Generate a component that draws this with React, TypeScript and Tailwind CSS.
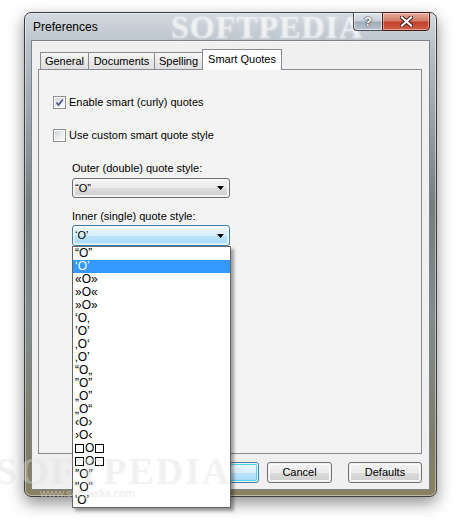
import React from "react";

const items = [
  "\u201CO\u201D",
  "\u2018O\u2019",
  "\u00ABO\u00BB",
  "\u00BBO\u00AB",
  "\u00BBO\u00BB",
  "\u2018O\u201A",
  "\u2019O\u2019",
  "\u201AO\u2018",
  "\u201AO\u2019",
  "\u201CO\u201E",
  "\u201DO\u201D",
  "\u201EO\u201D",
  "\u201EO\u201C",
  "\u2039O\u203A",
  "\u203AO\u2039",
  "BOX",
  "BOX",
  "\u2033O\u2033",
  '"O"',
  "'O'",
];

function Checkbox({ checked }: { checked: boolean }) {
  return (
    <div className="w-[13px] h-[13px] border border-[#8e8f8f] bg-white p-px shrink-0">
      <div className="w-full h-full bg-[linear-gradient(135deg,#d3d6da_0%,#eceef0_60%,#f8f8f8_100%)] relative">
        {checked && (
          <svg width="11" height="11" viewBox="0 0 11 11" className="absolute -left-px -top-px">
            <path d="M2.5 5.5 L4.5 8 L8.8 2.5" fill="none" stroke="#4a5c93" strokeWidth="1.8" />
          </svg>
        )}
      </div>
    </div>
  );
}

function Arrow() {
  return (
    <svg width="7" height="4" viewBox="0 0 7 4" className="shrink-0">
      <path d="M0 0 H7 L3.5 4 Z" fill="#000" />
    </svg>
  );
}

function VistaButton({ label, w, def }: { label: string; w: string; def?: boolean }) {
  return (
    <div
      className={`${w} h-[21px] rounded-[3px] border ${
        def ? "border-[#3c7fb1]" : "border-[#707070]"
      } p-px`}
    >
      <div
        className={`w-full h-full rounded-[2px] flex items-center justify-center text-[11px] text-black ${
          def
            ? "bg-[linear-gradient(180deg,#eaf6fd_0%,#d9f0fc_50%,#bee6fd_51%,#a7d9f5_100%)] shadow-[inset_0_0_0_1px_#48d6fb]"
            : "bg-[linear-gradient(180deg,#f2f2f2_0%,#ebebeb_50%,#dddddd_51%,#cfcfcf_100%)] shadow-[inset_0_0_0_1px_rgba(255,255,255,0.8)]"
        }`}
      >
        {label}
      </div>
    </div>
  );
}

function BoxItem() {
  return (
    <span className="inline-flex items-center gap-[1px] h-[13px]">
      <span className="inline-block w-[9px] h-[9px] border border-black" />
      <span>O</span>
      <span className="inline-block w-[9px] h-[9px] border border-black" />
    </span>
  );
}

export default function App() {
  return (
    <div className="relative w-[457px] h-[530px] bg-white overflow-hidden font-['Liberation_Sans',Arial,sans-serif] text-[11px] leading-[13px] text-black">
      {/* Window */}
      <div className="relative ml-[24px] mt-[12px] w-[413px] h-[485px] rounded-[7px] border border-[#3a3e43] flex flex-col bg-[linear-gradient(180deg,#d3d9df_0%,#bcc4cb_6%,#9aa3a9_22%,#737d7b_40%,#838c8c_62%,#7e7c68_88%,#8a8160_100%)] shadow-[inset_0_0_0_1px_rgba(255,255,255,0.45),0_6px_16px_rgba(0,0,0,0.45)]">
        {/* Title watermark */}
        <div className="absolute left-[146px] top-[-2px] text-[32px] leading-[32px] font-bold font-['Liberation_Serif',serif] tracking-[1px] text-white/40 [text-shadow:0_0_3px_rgba(255,255,255,0.6)] pointer-events-none select-none">
          SOFTPEDIA
        </div>
        {/* Title bar */}
        <div className="h-[27px] flex items-start relative">
          <div className="pl-[8px] pt-[7px] text-[12px] leading-[15px] text-black">
            Preferences
          </div>
          <div className="ml-auto mr-[6px] -mt-px flex">
            <div className="w-[29px] h-[19px] rounded-bl-[4px] border border-[#4a5058] border-r-0 bg-[linear-gradient(180deg,#e4e8ed_0%,#c8d0d8_45%,#a3adb8_55%,#b9c3cc_100%)] shadow-[inset_0_0_0_1px_rgba(255,255,255,0.5)] flex items-center justify-center">
              <span className="text-[13px] leading-[13px] font-bold text-white [text-shadow:0_0_2px_#222,0_0_1px_#222]">?</span>
            </div>
            <div className="w-[48px] h-[19px] rounded-br-[4px] border border-[#4a1c14] bg-[linear-gradient(180deg,#e9a99b_0%,#d47c6a_45%,#c2412c_55%,#d0604a_100%)] shadow-[inset_0_0_0_1px_rgba(255,255,255,0.4)] flex items-center justify-center">
              <svg width="13" height="11" viewBox="0 0 13 11">
                <path d="M2 1.5 L11 9.5 M11 1.5 L2 9.5" stroke="#3a1a14" strokeWidth="4" strokeLinecap="square" />
                <path d="M2 1.5 L11 9.5 M11 1.5 L2 9.5" stroke="#ffffff" strokeWidth="2.2" strokeLinecap="square" />
              </svg>
            </div>
          </div>
        </div>

        {/* Client area */}
        <div className="flex-1 mx-[6px] mb-[6px] border border-[#7b838c] bg-[#f0f0f0] flex flex-col">
          <div className="ml-[6px] mt-[8px] w-[384px]">
            {/* Tabs */}
            <div className="flex items-end h-[20px] pl-[2px]">
              <div className="w-[49px] h-[17px] border border-b-0 border-[#898c95] bg-[linear-gradient(180deg,#f7f7f7_0%,#e9e9e9_50%,#dedede_100%)] flex items-center justify-center">
                General
              </div>
              <div className="-ml-px w-[67px] h-[17px] border border-b-0 border-[#898c95] bg-[linear-gradient(180deg,#f7f7f7_0%,#e9e9e9_50%,#dedede_100%)] flex items-center justify-center">
                Documents
              </div>
              <div className="-ml-px w-[49px] h-[17px] border border-b-0 border-[#898c95] bg-[linear-gradient(180deg,#f7f7f7_0%,#e9e9e9_50%,#dedede_100%)] flex items-center justify-center">
                Spelling
              </div>
              <div className="-ml-px w-[80px] h-[21px] -mb-px relative z-10 border border-b-0 border-[#898c95] bg-white flex items-start justify-center pt-[3px]">
                Smart Quotes
              </div>
            </div>
            {/* Panel */}
            <div className="h-[385px] border border-[#898c95] bg-[#f3f3f3] flex flex-col">
              <div className="pl-[14px] mt-[26px] flex items-center gap-[3px]">
                <Checkbox checked />
                <span>Enable smart (curly) quotes</span>
              </div>
              <div className="pl-[14px] mt-[20px] flex items-center gap-[3px]">
                <Checkbox checked={false} />
                <span>Use custom smart quote style</span>
              </div>
              <div className="pl-[33px] mt-[20px] flex flex-col">
                <span>Outer (double) quote style:</span>
                <div className="mt-[3px] w-[158px] h-[20px] rounded-[3px] border border-[#707070] p-px">
                  <div className="w-full h-full rounded-[2px] bg-[linear-gradient(180deg,#f2f2f2_0%,#ebebeb_50%,#dddddd_51%,#cfcfcf_100%)] shadow-[inset_0_0_0_1px_rgba(255,255,255,0.7)] flex items-center pl-[1px] pr-[4px]">
                    <span className="flex-1">{"\u201CO\u201D"}</span>
                    <Arrow />
                  </div>
                </div>
                <span className="mt-[12px]">Inner (single) quote style:</span>
                <div className="mt-[2px] w-[158px] h-[21px] rounded-[3px] border border-[#3c7fb1] p-px">
                  <div className="w-full h-full rounded-[2px] bg-[linear-gradient(180deg,#eaf6fd_0%,#d9f0fc_50%,#bee6fd_51%,#a7d9f5_100%)] shadow-[inset_0_0_0_1px_rgba(255,255,255,0.5)] flex items-center pl-[1px] pr-[4px]">
                    <span className="flex-1">{"\u2018O\u2019"}</span>
                    <Arrow />
                  </div>
                </div>
              </div>
            </div>
          </div>
          {/* Buttons */}
          <div className="mt-[8px] mr-[7px] flex justify-end">
            <VistaButton label="OK" w="w-[74px]" def />
            <div className="ml-[8px]">
              <VistaButton label="Cancel" w="w-[65px]" />
            </div>
            <div className="ml-[16px]">
              <VistaButton label="Defaults" w="w-[74px]" />
            </div>
          </div>
        </div>
      </div>

      {/* Dropdown list overlay */}
      <div className="absolute left-[72px] top-[246px] w-[159px] h-[262px] border border-[#646464] bg-white shadow-[3px_3px_3px_rgba(0,0,0,0.35)] flex flex-col">
        {items.map((t, i) => (
          <div
            key={i}
            className={`h-[13px] leading-[13px] pl-[2px] whitespace-nowrap text-[12px] ${
              i === 1 ? "bg-[#3399ff] text-white" : "text-black"
            }`}
          >
            {t === "BOX" ? <BoxItem /> : t}
          </div>
        ))}
      </div>

      {/* Bottom watermark */}
      <div className="absolute left-[-4px] top-[452px] text-[38px] leading-[38px] font-bold font-['Liberation_Serif',serif] tracking-[2px] text-white/35 [text-shadow:0_0_1px_rgba(0,0,0,0.08)] pointer-events-none select-none">
        SOFTPEDIA<span className="text-[12px] align-top">™</span>
      </div>
      <div className="absolute left-[40px] top-[487px] text-[11px] leading-[12px] text-white/50 [text-shadow:0_0_1px_rgba(0,0,0,0.15)] pointer-events-none select-none">
        www.softpedia.com
      </div>
    </div>
  );
}
